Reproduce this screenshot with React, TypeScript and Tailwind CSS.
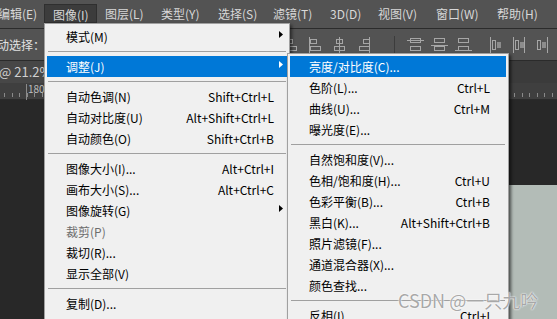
import React from 'react';

type Item =
  | { sep: true }
  | { sep?: false; label: string; keys?: string; arrow?: boolean; disabled?: boolean; active?: boolean };

const topMenu = [
  { label: '编辑(E)', w: 'w-[54px] -ml-[10px]' },
  { label: '图像(I)', w: 'w-[53px]', open: true },
  { label: '图层(L)', w: 'w-[56px]' },
  { label: '类型(Y)', w: 'w-[57px]' },
  { label: '选择(S)', w: 'w-[55px]' },
  { label: '滤镜(T)', w: 'w-[57px]' },
  { label: '3D(D)', w: 'w-[48px]' },
  { label: '视图(V)', w: 'w-[58px]' },
  { label: '窗口(W)', w: 'w-[61px]' },
  { label: '帮助(H)', w: 'w-[60px]' },
];

const imageMenu: Item[] = [
  { label: '模式(M)', arrow: true },
  { sep: true },
  { label: '调整(J)', arrow: true, active: true },
  { sep: true },
  { label: '自动色调(N)', keys: 'Shift+Ctrl+L' },
  { label: '自动对比度(U)', keys: 'Alt+Shift+Ctrl+L' },
  { label: '自动颜色(O)', keys: 'Shift+Ctrl+B' },
  { sep: true },
  { label: '图像大小(I)...', keys: 'Alt+Ctrl+I' },
  { label: '画布大小(S)...', keys: 'Alt+Ctrl+C' },
  { label: '图像旋转(G)', arrow: true },
  { label: '裁剪(P)', disabled: true },
  { label: '裁切(R)...' },
  { label: '显示全部(V)' },
  { sep: true },
  { label: '复制(D)...' },
  { label: '应用图像(Y)...' },
];

const adjustMenu: Item[] = [
  { label: '亮度/对比度(C)...', active: true },
  { label: '色阶(L)...', keys: 'Ctrl+L' },
  { label: '曲线(U)...', keys: 'Ctrl+M' },
  { label: '曝光度(E)...' },
  { sep: true },
  { label: '自然饱和度(V)...' },
  { label: '色相/饱和度(H)...', keys: 'Ctrl+U' },
  { label: '色彩平衡(B)...', keys: 'Ctrl+B' },
  { label: '黑白(K)...', keys: 'Alt+Shift+Ctrl+B' },
  { label: '照片滤镜(F)...' },
  { label: '通道混合器(X)...' },
  { label: '颜色查找...' },
  { sep: true },
  { label: '反相(I)', keys: 'Ctrl+I' },
  { label: '色调分离(P)...' },
];

const Arrow = ({ white }: { white?: boolean }) => (
  <svg width="4" height="7" viewBox="0 0 4 7" className="-mt-[4px]">
    <polygon points="0,0 4,3.5 0,7" fill={white ? '#ffffff' : '#000000'} />
  </svg>
);

const MenuList = ({ items, sub }: { items: Item[]; sub?: boolean }) => (
  <>
    {items.map((it, i) => {
      if (it.sep) {
        return (
          <div key={i} className="h-[9px] pt-[4px] px-[1px]">
            <div className="h-px bg-[#a0a0a0]" />
          </div>
        );
      }
      const pr = it.arrow ? 'pr-[4px]' : sub ? 'pr-[16px]' : 'pr-[13px]';
      const color = it.active ? 'bg-[#0078d7] text-white' : it.disabled ? 'text-[#6d6d6d]' : 'text-black';
      return (
        <div key={i} className={`h-[21px] flex items-center justify-between pl-[19px] ${pr} ${color}`}>
          <span className="whitespace-nowrap">{it.label}</span>
          {it.keys && <span className="whitespace-nowrap">{it.keys}</span>}
          {it.arrow && <Arrow white={it.active} />}
        </div>
      );
    })}
  </>
);

// alignment icons in the options bar
const AlignV = ({ side }: { side: 'l' | 'c' | 'r' }) => {
  const x = side === 'l' ? 1.5 : side === 'c' ? 7.5 : 13.5;
  const r1 = side === 'l' ? 2 : side === 'c' ? 4 : 7;
  const r2 = side === 'l' ? 2 : side === 'c' ? 2 : 3;
  return (
    <svg width="15" height="16" viewBox="0 0 15 16">
      <line x1={x} y1="0" x2={x} y2="16" stroke="#a6a6a6" />
      <rect x={r1 + 0.5} y="2.5" width="6" height="4" fill="none" stroke="#a6a6a6" />
      <rect x={r2 + 0.5} y="9.5" width="10" height="4" fill="none" stroke="#a6a6a6" />
    </svg>
  );
};

const AlignH = ({ side }: { side: 't' | 'c' | 'b' }) => {
  const y = side === 't' ? 3.5 : side === 'c' ? 8.5 : 13.5;
  return (
    <svg width="17" height="16" viewBox="0 0 17 16">
      <line x1="0" y1={y} x2="17" y2={y} stroke="#a6a6a6" />
      <rect x="3.5" y="1.5" width="10" height="4" fill="none" stroke="#a6a6a6" />
      <rect x="3.5" y="9.5" width="10" height="4" fill="none" stroke="#a6a6a6" />
    </svg>
  );
};

const Dist = ({ side }: { side: 'l' | 'c' | 'r' }) => (
  <svg width="14" height="16" viewBox="0 0 14 16">
    <line x1={side === 'r' ? 12.5 : 1.5} y1="0" x2={side === 'r' ? 12.5 : 1.5} y2="16" stroke="#a6a6a6" />
    {side === 'c' && <line x1="12.5" y1="0" x2="12.5" y2="16" stroke="#a6a6a6" />}
    <rect x={side === 'r' ? 2.5 : 3.5} y="3.5" width="3" height="9" fill="none" stroke="#a6a6a6" />
    <rect x={side === 'r' ? 7 : 8} y="5" width="4" height="6" fill="#8c8c8c" />
  </svg>
);

export default function App() {
  return (
    <div className="relative w-[557px] h-[319px] overflow-hidden bg-[#282828] font-['Noto_Sans_CJK_SC','Microsoft_YaHei',sans-serif] text-[12px]">
      {/* menu bar */}
      <div className="h-[28px] bg-[#535353] flex pt-[4px] text-[#d8d8d8]">
        {topMenu.map((m) => (
          <div
            key={m.label}
            className={`${m.w} shrink-0 h-[19px] leading-[19px] pl-[8px] whitespace-nowrap ${
              m.open ? 'bg-[#3c3c3c] border border-[#2f2f2f] pl-[7px] leading-[17px]' : ''
            }`}
          >
            {m.label}
          </div>
        ))}
      </div>
      <div className="h-px bg-[#2b2b2b]" />

      {/* options bar */}
      <div className="h-[31px] bg-[#535353] flex items-center text-[#e2e2e2]">
        <span className="-ml-[3px] w-[287px] shrink-0 whitespace-nowrap">动选择：</span>
        <div className="flex items-center gap-[9px] w-[100px] shrink-0">
          <AlignV side="l" />
          <AlignV side="l" />
          <AlignV side="c" />
          <AlignV side="r" />
        </div>
        <div className="w-px h-[18px] bg-[#3c3c3c] ml-[10px] mr-[12px]" />
        <div className="flex items-center gap-[7px]">
          <AlignH side="t" />
          <AlignH side="c" />
          <AlignH side="b" />
        </div>
        <div className="flex items-center gap-[9px] ml-[17px]">
          <Dist side="l" />
          <Dist side="c" />
          <Dist side="r" />
        </div>
      </div>

      {/* document tab */}
      <div className="h-[23px] bg-[#3b3b3b] flex border-t border-[#2b2b2b]">
        <div className="w-[220px] bg-[#474747] text-[#d0d0d0] text-[13px] leading-[22px] whitespace-nowrap -ml-[1px]">@ 21.2%</div>
      </div>

      {/* ruler */}
      <div className="h-[17px] bg-[#3f3f3f] flex items-end border-b border-[#2b2b2b] text-[#bdbdbd]">
        <div className="relative w-[557px] h-full">
          <span className="absolute left-[28px] top-0 text-[10px] leading-[12px]">180</span>
          <div className="absolute left-[26px] top-[1px] w-px h-[16px] bg-[#8a8a8a]" />
          <div className="flex items-end gap-[6.5px] pl-[4px] h-full pb-[2px]">
            {Array.from({ length: 74 }).map((_, i) => (
              <div key={i} className="w-px h-[4px] bg-[#8a8a8a] shrink-0" />
            ))}
          </div>
        </div>
      </div>

      {/* workspace + canvas */}
      <div className="flex flex-col h-[219px]">
        <div className="h-[85px]" />
        <div className="flex flex-1">
          <div className="w-[300px]" />
          <div className="flex-1 bg-[#b3bcb7]" />
        </div>
      </div>

      {/* 图像 menu */}
      <div className="absolute left-[44px] top-[23px] w-[246px] h-[320px] bg-[#f0f0f0] border border-[#a0a0a0] px-[2px] pt-[2px] shadow-[2px_2px_3px_rgba(0,0,0,0.5)]">
        <MenuList items={imageMenu} />
      </div>

      {/* 调整 submenu */}
      <div className="absolute left-[287px] top-[53px] w-[222px] h-[300px] bg-[#f0f0f0] border border-[#a0a0a0] px-[2px] pt-[2px] shadow-[2px_2px_3px_rgba(0,0,0,0.6)]">
        <MenuList items={adjustMenu} sub />
      </div>

      {/* watermark */}
      <div className="absolute left-[398px] top-[289px] text-[18px] leading-[22px] whitespace-nowrap text-[rgba(140,140,140,0.75)] [text-shadow:0_0_2px_#ffffff,0_0_1px_#ffffff]">
        CSDN @一只九吟
      </div>
    </div>
  );
}
